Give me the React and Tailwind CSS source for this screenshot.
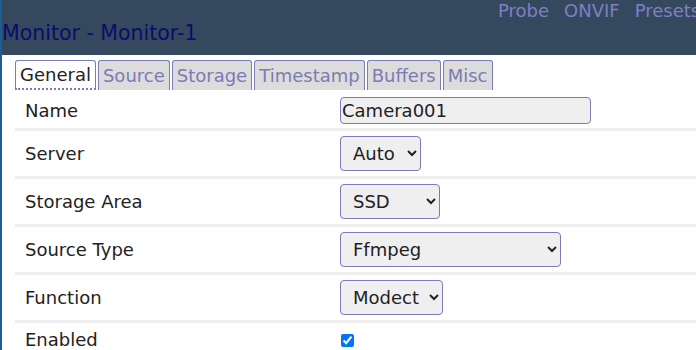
import { useState } from 'react';

const tabs = ['General', 'Source', 'Storage', 'Timestamp', 'Buffers', 'Misc'];

const Select = ({ value, options, width }) => (
  <select
    defaultValue={value}
    className={`${width} h-[35px] rounded-[4px] border border-[#7b7bb5] bg-[#efefef] pl-[8px] text-[18px] text-[#222] outline-none`}
  >
    {options.map((o) => (
      <option key={o}>{o}</option>
    ))}
  </select>
);

export default function App() {
  const [tab, setTab] = useState('General');
  const [enabled, setEnabled] = useState(true);

  const rows = [
    {
      label: 'Name',
      h: 'h-[38px]',
      control: (
        <input
          defaultValue="Camera001"
          className="w-[251px] h-[27px] rounded-[4px] border border-[#7b7bb5] bg-[#efefef] px-[1px] text-[18px] text-[#222] outline-none"
        />
      ),
    },
    { label: 'Server', control: <Select value="Auto" options={['Auto']} width="w-[81px]" /> },
    { label: 'Storage Area', control: <Select value="SSD" options={['SSD']} width="w-[100px]" /> },
    { label: 'Source Type', control: <Select value="Ffmpeg" options={['Ffmpeg']} width="w-[221px]" /> },
    { label: 'Function', control: <Select value="Modect" options={['Modect']} width="w-[103px]" /> },
    {
      label: 'Enabled',
      h: 'h-[32px]',
      control: (
        <input
          type="checkbox"
          checked={enabled}
          onChange={(e) => setEnabled(e.target.checked)}
          className="ml-[1px] mt-[2px] w-[13px] h-[13px] accent-[#0075ff]"
        />
      ),
    },
  ];

  return (
    <div
      className="w-[696px] h-[350px] overflow-hidden bg-white border-l-2 border-[#1d5d96]"
      style={{ fontFamily: '"DejaVu Sans", Verdana, sans-serif' }}
    >
      {/* cabecera */}
      <div className="h-[55px] bg-[#34495e] flex flex-col overflow-hidden">
        <div className="flex gap-[15px] pl-[496px] whitespace-nowrap text-[18px] text-[#7f7fc4] leading-[22px]">
          <span>Probe</span>
          <span>ONVIF</span>
          <span>Presets</span>
        </div>
        <h1 className="text-[20.5px] leading-[24px] text-[#0c0c6c] mt-[-1px] whitespace-nowrap">Monitor - Monitor-1</h1>
      </div>

      {/* pestañas */}
      <div className="flex gap-[2px] pl-[13px] pt-[5px]">
        {tabs.map((t) => (
          <button
            key={t}
            onClick={() => setTab(t)}
            className={`h-[30px] px-[4px] rounded-t-[3px] border border-[#7b7bb5] text-[18px] leading-[26px] whitespace-nowrap ${
              t === tab
                ? 'bg-white text-[#222] border-b-2'
                : 'bg-[#dcdcdc] text-[#7b7bb5] border-b-0'
            }`}
            style={t === tab ? { borderBottomStyle: 'dotted' } : undefined}
          >
            {t}
          </button>
        ))}
      </div>

      {/* formulario */}
      <div className="ml-[13px] mt-[3px]">
        {rows.map((r, i) => (
          <div
            key={r.label}
            className={`flex items-center ${r.h || 'h-[48px]'} ${
              i < rows.length - 1 ? 'border-b-[3px] border-[#efefef]' : ''
            }`}
          >
            <div className="w-[325px] pl-[10px] text-[18px] text-[#222] whitespace-nowrap">{r.label}</div>
            <div className="flex items-center">{r.control}</div>
          </div>
        ))}
      </div>
    </div>
  );
}
